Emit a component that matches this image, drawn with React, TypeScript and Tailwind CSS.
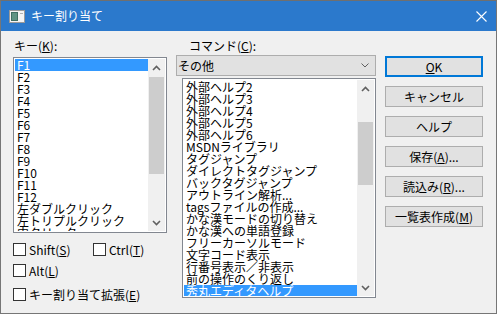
import React from "react";

const keys = [
  "F1", "F2", "F3", "F4", "F5", "F6", "F7", "F8", "F9", "F10", "F11", "F12",
  "左ダブルクリック", "左トリプルクリック", "中クリック",
];

const commands = [
  "外部ヘルプ2", "外部ヘルプ3", "外部ヘルプ4", "外部ヘルプ5", "外部ヘルプ6",
  "MSDNライブラリ", "タグジャンプ", "ダイレクトタグジャンプ", "バックタグジャンプ",
  "アウトライン解析...", "tagsファイルの作成...", "かな漢モードの切り替え",
  "かな漢への単語登録", "フリーカーソルモード", "文字コード表示",
  "行番号表示／非表示", "前の操作のくり返し", "秀丸エディタヘルプ",
];

function Chevron({ up }: { up?: boolean }) {
  return (
    <svg width="9" height="6" viewBox="0 0 9 6">
      <path
        d={up ? "M1 5 L4.5 1.5 L8 5" : "M1 1 L4.5 4.5 L8 1"}
        fill="none"
        stroke="#606060"
        strokeWidth="1.6"
      />
    </svg>
  );
}

function ScrollBar({ thumb }: { thumb: string }) {
  return (
    <div className="flex w-[17px] shrink-0 flex-col bg-[#f0f0f0]">
      <div className="flex h-[17px] items-center justify-center">
        <Chevron up />
      </div>
      <div className="flex-1 px-[1px]">
        <div className={`${thumb} bg-[#cdcdcd]`} />
      </div>
      <div className="flex h-[17px] items-center justify-center">
        <Chevron />
      </div>
    </div>
  );
}

function U({ c }: { c: string }) {
  return <span className="underline underline-offset-[1px]">{c}</span>;
}

function Check({ children }: { children: React.ReactNode }) {
  return (
    <div className="flex items-center gap-[3px]">
      <div className="h-[13px] w-[13px] border border-[#333333] bg-white" />
      <span>{children}</span>
    </div>
  );
}

function Button({ children, primary }: { children: React.ReactNode; primary?: boolean }) {
  return (
    <div
      className={`flex h-[21px] w-[98px] items-center justify-center bg-[#e1e1e1] ${
        primary ? "border-2 border-[#0078d7]" : "border border-[#adadad]"
      }`}
    >
      {children}
    </div>
  );
}

export default function App() {
  return (
    <div className="flex h-[314px] w-[497px] flex-col border border-[#767676] border-t-[#6f6f6f] bg-[#f0f0f0] font-['Noto_Sans_CJK_JP','Noto_Sans',sans-serif] text-[12px] leading-[12px] text-black">
      {/* title bar */}
      <div className="flex h-[30px] shrink-0 items-center bg-[#2b79cc] pl-[8px] pr-[9px] text-white">
        <svg width="16" height="13" viewBox="0 0 16 13">
          <rect x="0.5" y="0.5" width="15" height="12" fill="#f4f4f4" stroke="#9a9a9a" />
          <rect x="2" y="2" width="7" height="9" fill="#3f6f63" />
          <rect x="3" y="3" width="5" height="7" fill="#5f9484" />
          <rect x="11" y="3" width="3" height="1" fill="#b0b0b0" />
        </svg>
        <span className="ml-[6px]">キー割り当て</span>
        <div className="flex-1" />
        <svg width="11" height="11" viewBox="0 0 11 11">
          <path d="M0.5 0.5 L10.5 10.5 M10.5 0.5 L0.5 10.5" stroke="white" strokeWidth="1.1" />
        </svg>
      </div>

      {/* body */}
      <div className="flex gap-[9px] pl-[12px] pt-[9px]">
        {/* keys */}
        <div className="flex w-[154px] flex-col">
          <div className="pl-[1px]">
            キー(<U c="K" />):
          </div>
          <div className="mt-[5px] flex h-[176px] border border-[#828790] bg-white p-[1px]">
            <div className="flex-1 overflow-hidden">
              {keys.map((k, i) => (
                <div
                  key={k}
                  className={`h-[12px] whitespace-nowrap pl-[2px] ${i === 0 ? "bg-[#3399ff] text-white" : ""}`}
                >
                  {k}
                </div>
              ))}
            </div>
            <ScrollBar thumb="mt-[1px] h-[97px]" />
          </div>
          <div className="mt-[10px] flex">
            <div className="w-[80px]">
              <Check>
                Shift(<U c="S" />)
              </Check>
            </div>
            <Check>
              Ctrl(<U c="T" />)
            </Check>
          </div>
          <div className="mt-[8px]">
            <Check>
              Alt(<U c="L" />)
            </Check>
          </div>
          <div className="mt-[11px]">
            <Check>
              キー割り当て拡張(<U c="E" />)
            </Check>
          </div>
        </div>

        {/* commands */}
        <div className="flex w-[200px] flex-col">
          <div className="pl-[13px]">
            コマンド(<U c="C" />):
          </div>
          <div className="mt-[3px] flex h-[21px] items-center border border-[#adadad] bg-[#e1e1e1] pl-[1px] pr-[6px]">
            <span className="flex-1">その他</span>
            <svg width="8" height="5" viewBox="0 0 8 5">
              <path d="M0.5 0.5 L4 4 L7.5 0.5" fill="none" stroke="#606060" strokeWidth="1" />
            </svg>
          </div>
          <div className="ml-[6px] mt-[2px] flex h-[220px] border border-[#828790] bg-white p-[1px]">
            <div className="flex-1 overflow-hidden pt-[1px]">
              {commands.map((c, i) => (
                <div
                  key={c}
                  className={`h-[12px] whitespace-nowrap pl-[2px] ${
                    i === commands.length - 1 ? "bg-[#3399ff] text-white" : ""
                  }`}
                >
                  {c}
                </div>
              ))}
            </div>
            <ScrollBar thumb="mt-[25px] h-[63px]" />
          </div>
        </div>

        {/* buttons */}
        <div className="flex flex-col gap-[9px] pt-[16px]">
          <Button primary>
            <U c="O" />K
          </Button>
          <Button>キャンセル</Button>
          <Button>ヘルプ</Button>
          <Button>
            保存(<U c="A" />)...
          </Button>
          <Button>
            読込み(<U c="R" />)...
          </Button>
          <Button>
            一覧表作成(<U c="M" />)
          </Button>
        </div>
      </div>
    </div>
  );
}
